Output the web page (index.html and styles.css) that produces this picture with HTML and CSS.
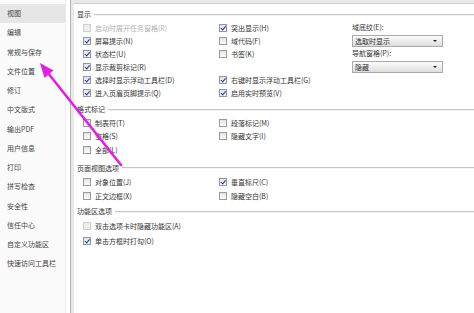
FILE: index.html
```html
<!DOCTYPE html>
<html lang="zh-CN">
<head>
  <meta charset="UTF-8" />
  <meta name="viewport" content="width=device-width, initial-scale=1.0" />
  <title>选项 - 视图</title>
  <link rel="stylesheet" href="styles.css">
</head>
<body>
  <nav class="sidebar">
    <div class="nav-item active">视图</div>
    <div class="nav-item">编辑</div>
    <div class="nav-item">常规与保存</div>
    <div class="nav-item">文件位置</div>
    <div class="nav-item">修订</div>
    <div class="nav-item">中文版式</div>
    <div class="nav-item">输出PDF</div>
    <div class="nav-item">用户信息</div>
    <div class="nav-item">打印</div>
    <div class="nav-item">拼写检查</div>
    <div class="nav-item">安全性</div>
    <div class="nav-item">信任中心</div>
    <div class="nav-item">自定义功能区</div>
    <div class="nav-item">快速访问工具栏</div>
  </nav>

  <main class="main">
    <div class="panel">
      <section class="group group-display">
        <div class="group-title">显示</div>
        <div class="group-body">
          <div class="col col-first">
            <label class="opt disabled"><span class="box"></span>启动时展开任务窗格(R)</label>
            <label class="opt"><span class="box checked"></span>屏幕提示(N)</label>
            <label class="opt"><span class="box checked"></span>状态栏(U)</label>
            <label class="opt"><span class="box checked"></span>显示裁剪标记(R)</label>
            <label class="opt"><span class="box checked"></span>选择时显示浮动工具栏(D)</label>
            <label class="opt"><span class="box checked"></span>进入页眉页脚提示(Q)</label>
          </div>
          <div class="col col-second">
            <label class="opt"><span class="box checked"></span>突出显示(H)</label>
            <label class="opt"><span class="box"></span>域代码(F)</label>
            <label class="opt"><span class="box"></span>书签(K)</label>
            <div class="opt"></div>
            <label class="opt"><span class="box checked"></span>右键时显示浮动工具栏(G)</label>
            <label class="opt"><span class="box checked"></span>启用实时预览(V)</label>
          </div>
          <div class="col col-fields">
            <div class="field-label">域底纹(E):</div>
            <div class="select">选取时显示</div>
            <div class="field-label">导航窗格(P):</div>
            <div class="select">隐藏</div>
          </div>
        </div>
      </section>

      <section class="group group-marks">
        <div class="group-title">格式标记</div>
        <div class="group-body">
          <div class="col col-first">
            <label class="opt"><span class="box"></span>制表符(T)</label>
            <label class="opt"><span class="box"></span>空格(S)</label>
            <label class="opt"><span class="box"></span>全部(L)</label>
          </div>
          <div class="col col-second">
            <label class="opt"><span class="box"></span>段落标记(M)</label>
            <label class="opt"><span class="box"></span>隐藏文字(I)</label>
          </div>
        </div>
      </section>

      <section class="group group-page">
        <div class="group-title">页面视图选项</div>
        <div class="group-body">
          <div class="col col-first">
            <label class="opt"><span class="box"></span>对象位置(J)</label>
            <label class="opt"><span class="box"></span>正文边框(X)</label>
          </div>
          <div class="col col-second">
            <label class="opt"><span class="box checked"></span>垂直标尺(C)</label>
            <label class="opt"><span class="box"></span>隐藏空白(B)</label>
          </div>
        </div>
      </section>

      <section class="group group-ribbon">
        <div class="group-title">功能区选项</div>
        <div class="group-body">
          <div class="col col-wide">
            <label class="opt"><span class="box dim"></span>双击选项卡时隐藏功能区(A)</label>
            <label class="opt"><span class="box checked"></span>单击方框时打勾(O)</label>
          </div>
        </div>
      </section>
    </div>
  </main>

  <svg class="annotation" width="474" height="313" viewBox="0 0 474 313">
    <line x1="121" y1="165" x2="48" y2="73" stroke="#e21fe4" stroke-width="2.6" stroke-linecap="round" />
    <polygon points="40,63 53.5,70.5 44.5,78" fill="#e21fe4" />
  </svg>
</body>
</html>
```

FILE: styles.css
```css
body {
  margin: 0;
  width: 474px;
  height: 313px;
  overflow: hidden;
  display: flex;
  position: relative;
  background: #fff;
  color: #333;
  font-family: "Noto Sans CJK SC", "Noto Sans", sans-serif;
  font-size: 7px;
}

.sidebar {
  width: 65px;
  flex: none;
  padding-top: 4px;
  background: #fbfbfb;
  border-right: 1px solid #ececec;
  margin-right: 4px;
}

.nav-item {
  height: 19.25px;
  line-height: 19.25px;
  padding-left: 7px;
  color: #444;
  white-space: nowrap;
}

.nav-item.active {
  background: #e6e6e6;
}

.main {
  flex: 1;
  display: flex;
  border-left: 1px solid #b4b4b4;
  background: #e9e9e9;
  padding: 3px 0 0 3px;
}

.panel {
  flex: 1;
  background: #fff;
  border-top: 1px solid #cdcdcd;
  padding: 4px 0 0 3px;
}

.group-title {
  display: flex;
  align-items: center;
  height: 13px;
  line-height: 13px;
  white-space: nowrap;
}

.group-title::after {
  content: "";
  flex: 1;
  margin-left: 3px;
  border-top: 1px solid #c6c6c6;
  border-bottom: 1px solid #f4f4f4;
}

.group-body {
  display: flex;
  padding-left: 6px;
}

.col {
  display: flex;
  flex-direction: column;
}

.col-first {
  width: 136px;
}

.col-second {
  width: 133px;
}

.opt {
  display: flex;
  align-items: center;
  gap: 4px;
  height: var(--row, 13px);
  white-space: nowrap;
}

.opt.disabled {
  color: #b3b3b3;
}

.group-display { --row: 13px; }
.group-marks { --row: 13.5px; margin-top: 4px; }
.group-page { --row: 14px; margin-top: 5px; }
.group-ribbon { --row: 15px; margin-top: 2.5px; }

.box {
  position: relative;
  width: 6px;
  height: 6px;
  flex: none;
  border: 1px solid #9a9a9a;
  background: linear-gradient(#e4e4e4, #fdfdfd);
}

.disabled .box,
.box.dim {
  border-color: #cfcfcf;
  background: #eeeeee;
}

.box.checked {
  border-color: #8e96ad;
  background: linear-gradient(#dfe3ee, #f6f7fb);
}

.box.checked::after {
  content: "";
  position: absolute;
  left: 2px;
  top: 0;
  width: 1.5px;
  height: 3.5px;
  border-right: 1.2px solid #263a78;
  border-bottom: 1.2px solid #263a78;
  transform: rotate(40deg);
}

.col-fields {
  width: 91px;
}

.field-label {
  height: 13px;
  line-height: 13px;
  white-space: nowrap;
}

.select {
  position: relative;
  height: 10px;
  line-height: 10px;
  margin-top: 1px;
  padding-left: 2px;
  border: 1px solid #aaaaaa;
  background: linear-gradient(#fbfbfb, #dedede);
}

.select::after {
  content: "";
  position: absolute;
  right: 5px;
  top: 4px;
  border-left: 2px solid transparent;
  border-right: 2px solid transparent;
  border-top: 2.5px solid #222;
}

.annotation {
  position: absolute;
  left: 0;
  top: 0;
  pointer-events: none;
}
```
